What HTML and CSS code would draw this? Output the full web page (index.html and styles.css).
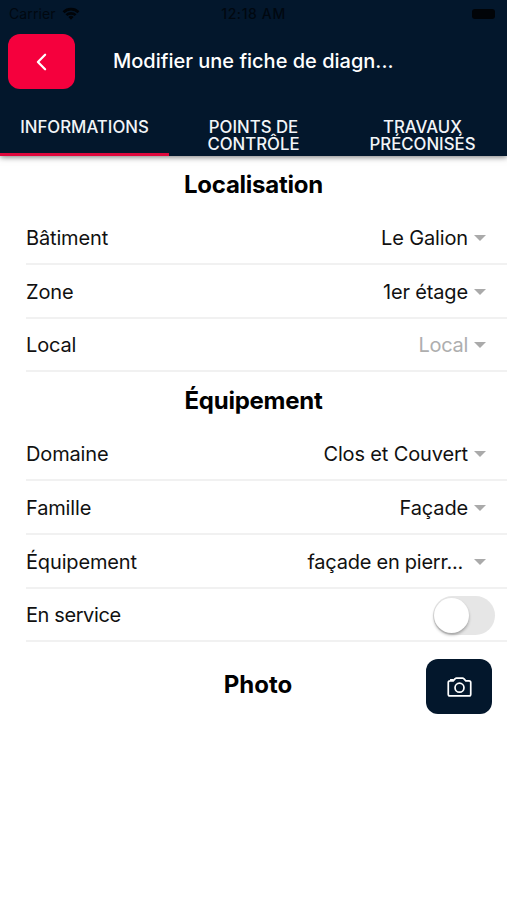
FILE: index.html
```html
<!DOCTYPE html>
<html lang="fr">
<head>
<meta charset="utf-8">
<meta name="viewport" content="width=device-width, initial-scale=1">
<title>Modifier une fiche de diagnostic</title>
<link rel="stylesheet" href="styles.css">
</head>
<body>
<header class="header">
  <div class="status">
    <div class="carrier"><span class="carrier-name">Carrier</span>
      <svg class="wifi" viewBox="0 0 18 13"><path d="M0.6 4.3A12 12 0 0 1 17.4 4.3L15.5 6.2A9.3 9.3 0 0 0 2.5 6.2ZM3.5 7.2A8 8 0 0 1 14.5 7.2L12.6 9.1A5.2 5.2 0 0 0 5.4 9.1ZM6.4 10A3.7 3.7 0 0 1 11.6 10L9 12.7Z"/></svg>
    </div>
    <span class="time">12:18 AM</span>
    <div class="battery-slot"><span class="battery"></span></div>
  </div>
  <div class="toolbar">
    <button class="back" aria-label="Retour"><svg viewBox="0 0 12 20"><path d="M10 2L2 10L10 18"/></svg></button>
    <h1 class="title">Modifier une fiche de diagn...</h1>
  </div>
  <nav class="tabs">
    <a class="tab active">INFORMATIONS</a>
    <a class="tab">POINTS DE<br>CONTRÔLE</a>
    <a class="tab">TRAVAUX<br>PRÉCONISÉS</a>
  </nav>
</header>
<main>
  <h2 class="section">Localisation</h2>
  <div class="rows">
    <div class="row"><span class="label">Bâtiment</span><span class="value">Le Galion</span><i class="caret"></i></div>
    <div class="row"><span class="label">Zone</span><span class="value">1er étage</span><i class="caret"></i></div>
    <div class="row"><span class="label">Local</span><span class="value empty">Local</span><i class="caret"></i></div>
  </div>
  <h2 class="section">Équipement</h2>
  <div class="rows">
    <div class="row"><span class="label">Domaine</span><span class="value">Clos et Couvert</span><i class="caret"></i></div>
    <div class="row"><span class="label">Famille</span><span class="value">Façade</span><i class="caret"></i></div>
    <div class="row"><span class="label">Équipement</span><span class="value cut">façade en pierr...</span><i class="caret"></i></div>
    <div class="row service"><span class="label">En service</span><span class="switch"><span class="knob"></span></span></div>
  </div>
  <div class="photo">
    <h2 class="photo-title">Photo</h2>
    <button class="camera" aria-label="Photo"><svg viewBox="0 0 26 21"><path d="M2.8 4H6.4L8.5 1.8Q9 1.2 9.8 1.2H16.2Q17 1.2 17.5 1.8L19.6 4H23Q24.8 4 24.8 5.8V18Q24.8 19.8 23 19.8H3Q1.2 19.8 1.2 18V5.8Q1.2 4 3 4"/><path d="M4 3.8V3H6V3.8"/><circle cx="13" cy="11.2" r="4.7"/></svg></button>
  </div>
</main>
</body>
</html>
```

FILE: styles.css
```css
* { box-sizing: border-box; }
body { margin: 0; background: #fff; color: #111; font-family: Inter, sans-serif; }
h1, h2 { margin: 0; }
button { border: 0; padding: 0; display: flex; align-items: center; justify-content: center; }
.header { height: 156px; background: #03172c; box-shadow: 0 1px 6px rgba(0, 0, 0, .55); }
.status { height: 27px; display: grid; grid-template-columns: 1fr auto 1fr; align-items: center; color: #010810; font-size: 14px; line-height: 27px; }
.carrier { display: flex; align-items: center; padding-left: 9px; gap: 6px; }
.carrier-name { letter-spacing: .1px; }
.wifi { width: 18px; height: 13px; fill: #010408; }
.time { font-weight: 500; letter-spacing: .6px; }
.battery-slot { display: flex; justify-content: flex-end; padding-right: 12px; }
.battery { width: 23px; height: 10px; border-radius: 3px; background: #010408; }
.toolbar { height: 71px; display: flex; align-items: flex-start; padding: 7px 8px 0; }
.back { width: 67px; height: 55px; border-radius: 12px; background: #f5003d; }
.back svg { width: 11px; height: 18px; fill: none; stroke: #fff; stroke-width: 2.5; stroke-linecap: round; stroke-linejoin: round; }
.title { margin-left: 38px; color: #fff; font-size: 20px; font-weight: 550; letter-spacing: 0; line-height: 55px; white-space: nowrap; }
.tabs { height: 58px; display: grid; grid-template-columns: repeat(3, 1fr); color: #f2f5f8; font-size: 16.8px; font-weight: 500; line-height: 17px; text-align: center; }
.tab { padding-top: 21px; border-bottom: 3px solid transparent; white-space: nowrap; }
.tab.active { border-bottom-color: #df083d; }
.section { height: 55px; line-height: 57px; color: #000; font-size: 24px; font-weight: 650; letter-spacing: -.25px; text-align: center; }
.rows { padding-left: 26px; }
.row { height: 53.75px; display: flex; align-items: center; border-bottom: 2px solid #f1f1f1; padding: 2px 21px 0 0; font-size: 20px; letter-spacing: -.15px; white-space: nowrap; }
.label { flex: 1; }
.value { text-align: right; }
.cut { margin-right: 5px; letter-spacing: -.25px; }
.empty { color: #aeaeae; letter-spacing: -.3px; }
.caret { width: 0; height: 0; margin-left: 6px; border: solid transparent; border-width: 6px 6px 0; border-top-color: #aaa; }
.service { padding-right: 12px; letter-spacing: -.4px; }
.switch { width: 62px; height: 39px; padding: 2px 1px; border-radius: 20px; background: #e6e6e6; }
.knob { display: block; width: 35px; height: 35px; border-radius: 50%; background: #fff; box-shadow: 0 2px 3px rgba(0, 0, 0, .3); }
.photo { display: grid; grid-template-columns: 1fr auto 1fr; align-items: start; padding: 17px 15px 0 24px; }
.photo-title { grid-column: 2; color: #000; font-size: 24px; font-weight: 700; line-height: 52px; }
.camera { justify-self: end; width: 66px; height: 55px; border-radius: 12px; background: #03172c; }
.camera svg { width: 25px; height: 20px; fill: none; stroke: #fff; stroke-width: 1.8; }
```
